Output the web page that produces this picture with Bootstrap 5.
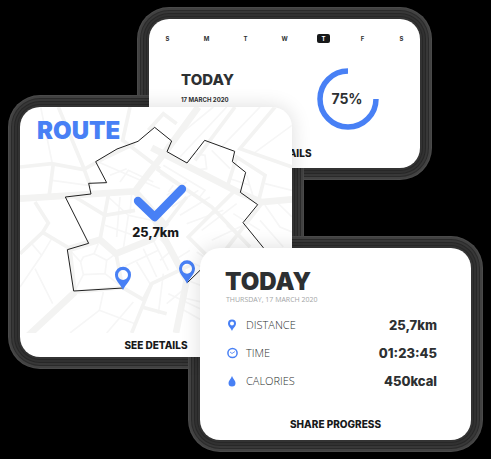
<!DOCTYPE html>
<html lang="en">
<head>
<meta charset="utf-8">
<meta name="viewport" content="width=device-width, initial-scale=1">
<title>Route tracker</title>
<link href="https://cdn.jsdelivr.net/npm/bootstrap@5.3.0/dist/css/bootstrap.min.css" rel="stylesheet">
<style>
  :root { --accent: #4880f5; --ink: #2d3032; }
  body { background: #000; color: var(--ink); font-family: Inter, "Open Sans", sans-serif; }
  .stage {
    display: grid;
    isolation: isolate;
    grid-template-columns: 20px 129fr 51fr 92fr 128fr 51fr 20px;
    grid-template-rows: 19px minmax(88px, auto) minmax(61px, auto) minmax(80px, auto) minmax(109px, auto) minmax(83px, auto) 19px;
  }
  .panel {
    position: relative;
    background: #fff;
    border-radius: 20px;
    box-shadow: 0 0 20px rgba(0, 0, 0, .14);
  }
  .panel::before {
    content: "";
    position: absolute;
    inset: 0;
    z-index: -1;
    border-radius: 20px;
    box-shadow: 0 0 0 2px #373737, 0 0 0 3px #2a2a2a, 0 0 0 5px #343434, 0 0 0 6px #292929, 0 0 0 8px #3a3a3a, 0 0 0 9px #2c2c2c, 0 0 0 11px #444, 0 0 0 12px #4c4c4c;
  }
  .panel-week { grid-area: 2 / 3 / 4 / 6; }
  .panel-route { grid-area: 3 / 2 / 6 / 5; }
  .panel-today { grid-area: 5 / 4 / 7 / 7; }
  .link-action {
    color: #17191a;
    font-size: 10px;
    line-height: 12px;
    font-weight: 800;
    background: none;
    border: 0;
    padding: 0;
  }
  .week { font-size: 6px; line-height: 9px; font-weight: 700; padding: 15px 12px 0; }
  .week li { width: 13px; text-align: center; border-radius: 2px; }
  .week .current { background: #17191a; color: #fff; }
  .week-body { padding: 25px 41px 0 32px; }
  .week-title { font-size: 15px; line-height: 18px; font-weight: 800; margin: 3px 0 7px; }
  .week-date { font-size: 6px; line-height: 8px; font-weight: 700; }
  .dial { width: 62px; height: 62px; }
  .dial text { font: 700 14px Inter, sans-serif; fill: var(--ink); }
  .panel-week .link-action { margin: 17px 0 9px; padding-right: 9px; }
  .map-box { border-radius: 20px 20px 0 0; }
  .route-title { font-size: 24px; line-height: 28px; font-weight: 900; color: var(--accent); left: 17px; top: 10px; }
  .map-box text { font: 800 38px Inter, sans-serif; fill: #17191a; }
  .panel-route .link-action { margin: 6px 0 6px; }
  .today-body { padding: 20px 34px 0 25px; }
  .today-title { font-size: 24px; line-height: 28px; font-weight: 900; }
  .today-date { font-family: "Open Sans", sans-serif; font-size: 7px; line-height: 8px; color: #a3a5a6; padding-left: 1px; }
  .stats { margin: 7px 0 15px; }
  .stats > div { height: 28px; }
  .stats svg { width: 12px; height: 12px; margin-left: 1px; }
  .stats dt { font: 300 11px/16px "Open Sans", sans-serif; margin-left: 8px; }
  .stats dd { font-size: 13px; line-height: 16px; font-weight: 800; }
  .panel-today .link-action { margin-bottom: 10px; }
</style>
</head>
<body>
<main class="stage">
  <section class="panel panel-week d-flex flex-column" aria-label="Week">
    <ol class="week list-unstyled d-flex justify-content-between mb-0">
      <li>S</li><li>M</li><li>T</li><li>W</li><li class="current">T</li><li>F</li><li>S</li>
    </ol>
    <div class="week-body d-flex justify-content-between">
      <div>
        <h2 class="week-title">TODAY</h2>
        <p class="week-date mb-0">17 MARCH 2020</p>
      </div>
      <svg class="dial" viewBox="0 0 62 62" role="img" aria-label="75 percent">
        <path d="M31 3A28 28 0 1 0 59 31" fill="none" stroke="#4880f5" stroke-width="5.5"/>
        <text x="30" y="36" text-anchor="middle">75%</text>
      </svg>
    </div>
    <button class="link-action text-center" type="button">SEE DETAILS</button>
  </section>

  <section class="panel panel-route d-flex flex-column" aria-label="Route">
    <h2 class="route-title position-absolute mb-0">ROUTE</h2>
    <div class="map-box overflow-hidden">
      <svg class="d-block w-100" viewBox="0 0 816 678" role="img" aria-label="Route map">
        <g fill="none" stroke="#f3f3f2">
          <g stroke-width="5" stroke="#f6f6f6">
            <path d="M62 0L96 165"/>
            <path d="M96 220L205 235"/>
            <path d="M440 115L580 0M480 150L620 0M600 125L720 0M700 140L816 55"/>
            <path d="M190 450L222 440L260 460L255 500L190 503L182 465ZM222 440L235 410M260 460L285 442M255 500L300 535M190 503L165 550M182 465L150 430"/>
            <path d="M35 410L65 445L95 395M65 445L0 540M45 485L98 590"/>
            <path d="M250 555L238 610L150 678M238 610L345 650M260 678L340 585"/>
            <path d="M235 165L420 245M270 205L320 185M300 225L325 190L400 225"/>
            <path d="M265 270L325 325L420 345M300 270L290 390M325 325L310 425M255 355L340 385M335 260L330 320"/>
            <path d="M310 480L415 430M350 465L390 530M400 400L445 490M370 425L410 510M430 500L415 620M445 560L550 610M440 590L500 540"/>
            <path d="M490 180L520 140L555 145L560 185L515 190M575 130L630 185"/>
            <path d="M440 265L500 225M455 300L535 250M480 325L570 270M500 350L610 310M545 370L650 290M575 400L680 350M620 355L690 420M640 320L720 370"/>
            <path d="M420 200L535 275L555 250L430 175M460 235L445 255"/>
            <path d="M735 295L780 360L816 375M720 340L790 420M770 285L816 330M680 205L700 270M630 215L690 235M735 230L816 250"/>
            <path d="M500 460L590 500M530 435L590 475M490 515L580 550M475 600L545 640M480 570L565 590M420 395L470 455L510 430M420 460L455 430"/>
          </g>
          <g stroke-width="11">
            <path d="M0 180L95 170L190 188L260 150L345 110"/>
            <path d="M100 170L88 262"/>
            <path d="M115 0L190 180L212 240"/>
            <path d="M330 0L308 100L420 185"/>
            <path d="M45 285L85 348L68 376L0 440"/>
            <path d="M68 376L150 425L165 555L308 542L288 440"/>
            <path d="M165 270L255 325L345 310"/>
            <path d="M265 265L240 398"/>
            <path d="M308 542L370 578L395 530L510 475"/>
            <path d="M395 530L335 678"/>
            <path d="M365 600L440 620"/>
            <path d="M385 70L430 20L470 50"/>
            <path d="M645 0L525 160"/>
            <path d="M765 0L660 125L816 180"/>
            <path d="M410 185L575 300L690 420"/>
            <path d="M645 250L505 390L560 445"/>
            <path d="M725 290L600 450"/>
            <path d="M620 245L650 150L735 205L715 285"/>
            <path d="M500 270L400 400"/>
          </g>
          <g stroke-width="20">
            <path d="M0 275L345 253L385 200L440 130L535 0"/>
            <path d="M345 253L440 360"/>
            <path d="M395 122L660 258L725 285L816 277"/>
            <path d="M20 690L165 555"/>
            <path d="M150 425L240 398L288 440L400 395"/>
            <path d="M400 330L500 520L468 678"/>
          </g>
        </g>
        <path d="M309 543L161 552L142 428L206 409L136 270L213 261L206 229L260 227L227 164L291 126L354 103L404 61L455 102L441 134L501 168L554 100L644 133L637 164L677 196L661 256L713 293L669 347L730 422L760 460L540 490L502 527" fill="none" stroke="#202020" stroke-width="3"/>
        <path d="M354 282L404 330L486 246" fill="none" stroke="#4880f5" stroke-width="25" stroke-linecap="round" stroke-linejoin="round"/>
        <text x="407" y="389" text-anchor="middle">25,7km</text>
        <g fill="#4880f5" fill-rule="evenodd">
          <path d="M309 549C300 530 285 521 285 503A24 24 0 0 1 333 503C333 521 318 530 309 549ZM309 489A15 15 0 1 0 309 519A15 15 0 1 0 309 489Z"/>
          <path d="M501 530C492 511 477 502 477 484A24 24 0 0 1 525 484C525 502 510 511 501 530ZM501 470A15 15 0 1 0 501 500A15 15 0 1 0 501 470Z"/>
        </g>
      </svg>
    </div>
    <button class="link-action text-center" type="button">SEE DETAILS</button>
  </section>

  <section class="panel panel-today d-flex flex-column" aria-label="Today">
    <div class="today-body">
      <h2 class="today-title mb-0">TODAY</h2>
      <p class="today-date mb-0">THURSDAY, 17 MARCH 2020</p>
      <dl class="stats">
        <div class="d-flex align-items-center">
          <svg viewBox="0 0 12 12" aria-hidden="true"><path fill="#4880f5" fill-rule="evenodd" d="M6 12C5 9 2 7.500 2 4.500A4 4 0 0 1 10 4.500C10 7.500 7 9 6 12ZM6 2.500A2 2 0 1 0 6 6.500A2 2 0 1 0 6 2.500Z"/></svg>
          <dt>DISTANCE</dt><dd class="ms-auto mb-0">25,7km</dd>
        </div>
        <div class="d-flex align-items-center">
          <svg viewBox="0 0 12 12" aria-hidden="true"><circle cx="6.500" cy="6" r="4.600" fill="none" stroke="#4880f5" stroke-width="1.500"/><path d="M4 5L6 6.500L9 4.500" fill="none" stroke="#4880f5" stroke-width=".8"/></svg>
          <dt>TIME</dt><dd class="ms-auto mb-0">01:23:45</dd>
        </div>
        <div class="d-flex align-items-center">
          <svg viewBox="0 0 12 12" aria-hidden="true"><path fill="#4880f5" d="M6 1C7 4 9.500 5.500 9.500 8A3.500 3.500 0 0 1 2.500 8C2.500 5.500 5 4 6 1Z"/></svg>
          <dt>CALORIES</dt><dd class="ms-auto mb-0">450kcal</dd>
        </div>
      </dl>
    </div>
    <button class="link-action text-center mt-auto" type="button">SHARE PROGRESS</button>
  </section>
</main>
<script src="https://cdn.jsdelivr.net/npm/bootstrap@5.3.0/dist/js/bootstrap.bundle.min.js"></script>
</body>
</html>
